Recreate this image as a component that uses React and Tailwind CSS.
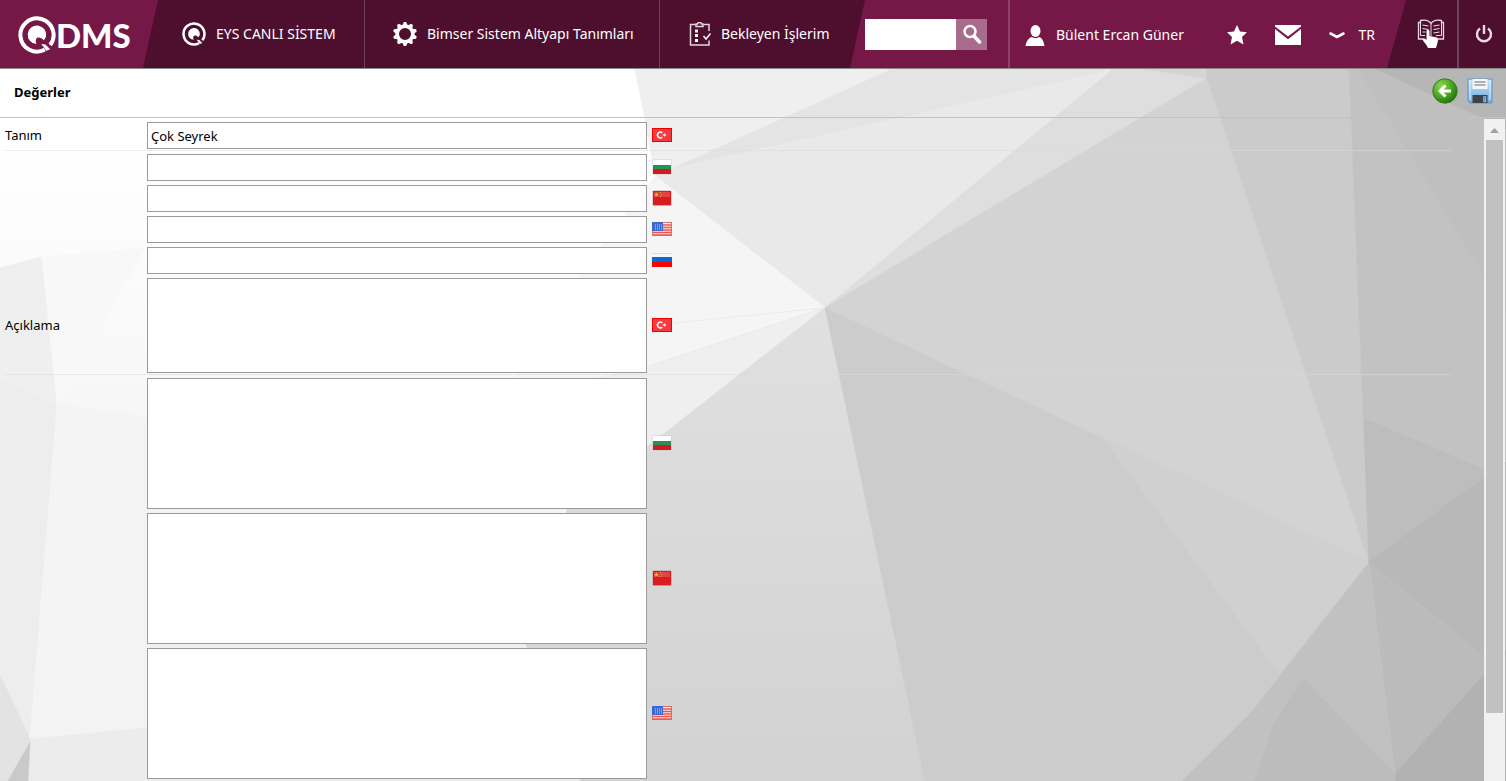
import React, { useState } from 'react';

const flagTypes = {
  tr: 'Türkçe',
  bg: 'Български',
  cn: '中文',
  us: 'English',
  ru: 'Русский',
};

const rows = [
  { id: 'tanim-tr', label: 'Tanım', lang: 'tr', value: 'Çok Seyrek' },
  { id: 'tanim-bg', lang: 'bg' },
  { id: 'tanim-cn', lang: 'cn' },
  { id: 'tanim-us', lang: 'us' },
  { id: 'tanim-ru', lang: 'ru' },
  { id: 'aciklama-tr', label: 'Açıklama', lang: 'tr', area: 'h-[95px]' },
  { id: 'aciklama-bg', lang: 'bg', area: 'h-[131px]' },
  { id: 'aciklama-cn', lang: 'cn', area: 'h-[131px]' },
  { id: 'aciklama-us', lang: 'us', area: 'h-[131px]' },
];

const facets = [
  // left side
  ['0,267 42,256 57,404 0,380', '#efefef'],
  ['42,256 145,247 57,404', '#f8f8f8'],
  ['0,380 57,404 30,739 0,675', '#ededed'],
  ['57,404 147,417 147,728 30,739', '#f3f3f3'],
  ['57,404 147,417 30,739', '#f4f4f4'],
  ['30,739 147,728 600,700 600,781 28,781', '#ececec'],
  ['0,675 30,739 8,781 0,781', '#e3e3e3'],
  ['30,742 8,781 28,781', '#c9c9c9'],
  // top middle
  ['635,68 892,68 672,168 655,175 645,118', '#efefef'],
  ['892,68 1120,68 1020,90 672,168', '#e4e4e4'],
  ['672,168 1020,90 1113,68 825,307 655,175', '#e9e9e9'],
  ['655,175 825,307 567,509 500,400 560,300', '#f5f5f5'],
  ['825,307 647,366 500,400 567,509', '#efefef'],
  ['1113,68 1207,68 1207,78 825,307', '#dedede'],
  ['1145,68 1207,68 1207,78', '#d5d5d5'],
  // centre
  ['825,307 567,509 526,644 581,781 925,781', 'url(#fade)'],
  ['825,307 1207,77 1369,562', '#d3d3d3'],
  ['825,307 1369,562 1250,714 1182,781 925,781', '#cccccc'],
  ['825,307 1369,562 1279,673 1104,439', '#d0d0d0'],
  // right side
  ['1207,68 1349,68 1369,562 1207,77', '#cbcbcb'],
  ['1349,68 1506,68 1506,460 1369,562', '#c2c2c2'],
  ['1358,68 1376,68 1506,130 1506,310', '#bfbfbf'],
  ['1376,68 1506,68 1506,128', '#b6b6b6'],
  ['1364,418 1506,478 1369,562', '#bdbdbd'],
  ['1369,562 1506,461 1506,675', '#b8b8b8'],
  ['1369,562 1506,675 1395,774', '#bbbbbb'],
  ['1395,774 1506,650 1506,781 1395,781', '#b2b2b2'],
  ['1369,562 1250,714 1182,781 1395,781 1395,774', '#c1c1c1'],
  ['1303,678 1274,723 1255,781 1395,781 1395,774', '#bcbcbc'],
];

const Backdrop = () => (
  <svg className="absolute inset-0 w-full h-full" viewBox="0 68 1506 713" preserveAspectRatio="none" aria-hidden="true">
    <defs>
      <linearGradient id="base" x1="0" y1="0" x2="0" y2="1">
        <stop offset="0.1" stopColor="#ffffff" />
        <stop offset="0.6" stopColor="#f4f4f4" />
        <stop offset="1" stopColor="#ececec" />
      </linearGradient>
      <linearGradient id="fade" x1="0" y1="0" x2="0" y2="1">
        <stop offset="0" stopColor="#e0e0e0" />
        <stop offset="1" stopColor="#d2d2d2" />
      </linearGradient>
    </defs>
    <rect x="0" y="68" width="1506" height="713" fill="url(#base)" />
    {facets.map(([points, fill]) => (
      <polygon key={points} points={points} fill={fill} stroke={fill} strokeWidth="0.6" />
    ))}
    <path d="M647 325L825 307M647 366L825 307" stroke="#ebebeb" fill="none" />
  </svg>
);

const QMark = ({ className }) => (
  <svg className={className} viewBox="0 0 36 36" aria-hidden="true">
    <path d="M30.500 27.500A15.700 15.700 0 1 0 25.500 31.800" fill="none" stroke="#fff" strokeWidth="3.800" />
    <path d="M26.500 20A8.800 8.800 0 1 0 17.500 26.600C16.300 24 16.800 22 18 20.600C20.500 20 22.500 21 24.500 23Z" fill="#fff" />
    <path d="M22 26.500L26 27L30.500 31.500L27 33Z" fill="#fff" />
  </svg>
);

const GearIcon = () => (
  <svg className="w-6 h-6" viewBox="0 0 24 24" aria-hidden="true">
    <circle cx="12" cy="12" r="7.700" fill="none" stroke="#fff" strokeWidth="3.400" />
    {[0, 36, 72, 108, 144, 180, 216, 252, 288, 324].map(a => (
      <path key={a} d="M9.200 3.500L10.900 0H13.100L14.800 3.500Z" fill="#fff" transform={`rotate(${a} 12 12)`} />
    ))}
  </svg>
);

const ClipboardIcon = () => (
  <svg className="w-[22px] h-6" viewBox="0 0 22 24" fill="none" stroke="#e6d6de" strokeWidth="1.500" aria-hidden="true">
    <path d="M6.500 2.500H1.500V23H20V18.500M14.500 2.500H20V9" />
    <path d="M7 2V4.500H14V2H12.500A2 1.500 0 0 0 8.500 2Z" />
    <path d="M6 9H9M6 13.500H9M6 18.500H9" stroke="#fff" strokeWidth="3" />
    <path d="M14.500 14L17 17L21.500 11.500" stroke="#fff" />
  </svg>
);

const SearchIcon = () => (
  <svg className="w-5 h-5" viewBox="0 0 20 20" fill="none" stroke="#fff" aria-hidden="true">
    <circle cx="8" cy="7.500" r="5.500" strokeWidth="2.500" />
    <path d="M12 12L17.500 18" strokeWidth="3.500" strokeLinecap="round" />
  </svg>
);

const UserIcon = () => (
  <svg className="w-5 h-[21px]" viewBox="0 0 20 21" fill="#fff" aria-hidden="true">
    <ellipse cx="10.500" cy="6" rx="5" ry="6" />
    <path d="M0.500 21C1.500 15.500 3.500 13.500 6.500 12C9 13.500 12 13.500 14.500 12C17 13.500 18.500 15.500 19.500 21Z" />
  </svg>
);

const StarIcon = () => (
  <svg className="w-5 h-5" viewBox="0 0 20 20" fill="#fff" aria-hidden="true">
    <path d="M10 0L13 6.600L20 7.300L15 12L16.500 19.500L10 15.800L3.500 19.500L5 12L0 7.300L7 6.600Z" />
  </svg>
);

const MailIcon = () => (
  <svg className="w-[26px] h-5" viewBox="0 0 26 20" fill="#fff" aria-hidden="true">
    <path d="M0 0H26V1.500L13 11.500L0 1.500Z" />
    <path d="M0 4L13 14.200L26 4V20H0Z" />
  </svg>
);

const ChevronIcon = () => (
  <svg className="w-4 h-2" viewBox="0 0 16 8" fill="none" stroke="#fff" strokeWidth="2.600" aria-hidden="true">
    <path d="M1.500 2.500L8 6L14.500 2.500" strokeLinecap="round" />
  </svg>
);

const BookIcon = () => (
  <svg className="w-7 h-[30px]" viewBox="0 0 28 30" fill="none" stroke="#e9dae2" aria-hidden="true">
    <path d="M6.500 20H1.500V3.500H3.500V1.500C8 0.500 12 1.500 14 4.500C16 1.500 20 0.500 24.500 1.500V3.500H26.500V20H21" strokeWidth="1.300" />
    <path d="M14 4.500V17M3.500 3V16.500H8M24.500 3V16.500H19" strokeWidth="1" />
    <path d="M5.500 6L11.500 7M5.500 9.500L11.500 10.500M5.500 13H8.500M22.500 6L16.500 7M22.500 9.500L16.500 10.500M22.500 13L16.500 14" strokeWidth="1.100" />
    <path d="M9.500 12C9.500 10.500 12.500 10.500 12.500 12V17L20 18.500C21.500 19 21 22 20.500 24L19 29H11C10 26 6.500 23 5.500 20.500C6 19 8 19.500 9.500 21Z" fill="#fff" stroke="none" />
  </svg>
);

const PowerIcon = () => (
  <svg className="w-[18px] h-[18px]" viewBox="0 0 18 18" fill="none" stroke="#e9dae2" strokeWidth="2.400" aria-hidden="true">
    <path d="M5 3.500A7 7 0 1 0 13 3.500" />
    <path d="M9 0V9" />
  </svg>
);

const BackIcon = () => (
  <svg className="w-[26px] h-[26px]" viewBox="0 0 26 26" aria-hidden="true">
    <defs>
      <radialGradient id="green" cx="0.350" cy="0.300" r="0.750">
        <stop offset="0" stopColor="#8ed84f" />
        <stop offset="0.600" stopColor="#45a41f" />
        <stop offset="1" stopColor="#23700c" />
      </radialGradient>
    </defs>
    <circle cx="13" cy="13" r="12.200" fill="url(#green)" stroke="#347b20" />
    <path d="M19 13H8M13.500 7.500L8 13L13.500 18.500" stroke="#fff" strokeWidth="3" fill="none" />
  </svg>
);

const SaveIcon = () => (
  <svg className="w-[26px] h-[26px]" viewBox="0 0 26 26" aria-hidden="true">
    <defs>
      <linearGradient id="blue" x1="0" y1="0" x2="0" y2="1">
        <stop offset="0" stopColor="#c3e0f6" />
        <stop offset="1" stopColor="#6fabe0" />
      </linearGradient>
    </defs>
    <path d="M1 1H25V25H3L1 23Z" fill="url(#blue)" stroke="#5f94c8" />
    <path d="M3 2V22M23 2V22" stroke="#e0f1fd" />
    <path d="M5.500 1H20.500V11H5.500Z" fill="#f7f7f7" />
    <path d="M7.500 4H18.500M7.500 7H18.500" stroke="#999" strokeWidth="1.500" />
    <path d="M5.500 17H20.500V25H5.500Z" fill="#3c4248" />
    <path d="M16.500 18.500H19V24H16.500Z" fill="#4d9ee0" stroke="#a9d4f5" strokeWidth="0.500" />
  </svg>
);

const Flag = ({ lang }) => (
  <svg className="w-5 h-4 mb-0.5 shrink-0" viewBox="0 0 20 16" role="img" aria-label={flagTypes[lang]}>
    {lang === 'tr' && (
      <>
        <rect x="0.500" y="1.500" width="19" height="13" fill="#f93a3d" stroke="#f00000" />
        <path d="M10.300 6A2.800 2.800 0 1 0 10.300 10" fill="none" stroke="#fff" strokeWidth="1.500" />
        <path d="M10.500 8L13 6.300V7.300L14.500 8L13 8.900V9.800Z" fill="#fff" />
      </>
    )}
    {lang === 'bg' && (
      <>
        <rect x="0.500" y="0.500" width="19" height="15" rx="1" fill="#bbb" opacity="0.600" />
        <rect x="1" y="1" width="18" height="5" fill="#fff" />
        <rect x="1" y="6" width="18" height="4" fill="#279157" />
        <rect x="1" y="10" width="18" height="5" fill="#d5191f" />
      </>
    )}
    {lang === 'cn' && (
      <>
        <rect x="0.500" y="0.500" width="19" height="15.500" rx="1" fill="#a33" opacity="0.400" />
        <rect x="1" y="1" width="18" height="14" fill="#d91c20" />
        <rect x="2" y="2" width="16" height="5" fill="#df4446" />
        <path d="M4.500 2.500L5.200 4H6.500L5.500 5L6 6.500L4.500 5.600L3 6.500L3.500 5L2.500 4H3.800Z" fill="#f6c928" />
        <path d="M8 2.500H9M9 4.500H10M8 6.500H9" stroke="#f0a32a" />
      </>
    )}
    {lang === 'us' && (
      <>
        <rect x="0.500" y="1.500" width="19" height="13" fill="#fbe9e4" stroke="#cf7468" />
        <path d="M1 4H19M1 6.500H19M1 9H19M1 11.500H19M1 14H19" stroke="#f0564e" strokeWidth="1.300" />
        <rect x="0" y="1" width="11" height="9" fill="#3a68cf" />
        <path d="M3 4H10M3 6H10M3 8H10" stroke="#bcd2fa" strokeDasharray="1 1" />
      </>
    )}
    {lang === 'ru' && (
      <>
        <rect x="0" y="1" width="20" height="5" fill="#f7f7f7" />
        <rect x="0" y="5" width="20" height="5" fill="#0b6ad0" />
        <rect x="0" y="10" width="20" height="5" fill="#f50505" />
        <path d="M0 1.500H20" stroke="#ddd" />
      </>
    )}
  </svg>
);

const Header = () => (
  <header className="flex h-[69px] shrink-0 bg-[#751848] border-b border-[#8a8a8a] text-white text-sm">
    <a href="#home" className="flex items-center w-[143px] shrink-0 pl-[18px] pt-0.5" aria-label="QDMS">
      <QMark className="w-[38px] h-[38px]" />
      <span className="font-[Lato,sans-serif] font-black text-[33px] leading-8">DMS</span>
    </a>
    <nav className="flex shrink-0 w-[722px] bg-[#4e0f2f] [clip-path:polygon(15px_0,100%_0,calc(100%-15px)_100%,0_100%)]">
      <a href="#sistem" className="flex items-center gap-[10px] w-[222px] pl-[39px] border-r border-[#71405a] whitespace-nowrap">
        <QMark className="w-6 h-6" />
        EYS CANLI SİSTEM
      </a>
      <a href="#altyapi" className="flex items-center gap-[10px] w-[295px] pl-7 border-r border-[#71405a] whitespace-nowrap">
        <GearIcon />
        Bimser Sistem Altyapı Tanımları
      </a>
      <a href="#isler" className="flex items-center gap-[10px] pl-[29px] whitespace-nowrap">
        <ClipboardIcon />
        Bekleyen İşlerim
      </a>
    </nav>
    <form className="flex items-center shrink-0 pr-[21px] border-r-2 border-[#8d4069]" onSubmit={e => e.preventDefault()}>
      <input type="search" aria-label="Ara" className="w-[91px] h-[31px] bg-white px-1 text-black outline-none" />
      <button type="submit" aria-label="Ara" className="flex items-center justify-center w-[31px] h-[31px] bg-[#a76b8b]">
        <SearchIcon />
      </button>
    </form>
    <div className="flex flex-1 items-center pl-[15px] pt-0.5">
      <a href="#profil" className="flex items-center gap-[11px] whitespace-nowrap">
        <UserIcon />
        Bülent Ercan Güner
      </a>
      <div className="flex items-center ml-auto pr-3">
        <button type="button" aria-label="Favoriler" className="mr-7"><StarIcon /></button>
        <button type="button" aria-label="Mesajlar" className="mr-7"><MailIcon /></button>
        <button type="button" className="flex items-center gap-[14px]">
          <ChevronIcon />
          TR
        </button>
      </div>
    </div>
    <div className="flex shrink-0 bg-[#4e0f2f] [clip-path:polygon(19px_0,100%_0,100%_100%,0_100%)]">
      <button type="button" aria-label="Yardım" className="flex items-center pl-[30px] pr-3 border-r-2 border-[#71405a]">
        <BookIcon />
      </button>
      <button type="button" aria-label="Çıkış" className="flex items-center pl-4 pr-[13px]">
        <PowerIcon />
      </button>
    </div>
  </header>
);

const FormRow = ({ row }) => {
  const [value, setValue] = useState(row.value || '');
  const line = row.label ? 'border-b border-dotted border-[#dadada]' : '';
  const field = 'block w-[500px] bg-white border border-[#9b9b9b] px-[3px] outline-none';
  return (
    <div className="flex gap-0.5">
      <div className={`flex items-center w-[141px] shrink-0 pl-px pt-[3px] pb-px ${line}`}>
        {row.label && <label htmlFor={row.id}>{row.label}</label>}
      </div>
      <div className={`flex flex-1 items-center gap-[5px] pt-[3px] pb-px ${line}`}>
        {row.area ? (
          <textarea
            id={row.id}
            aria-label={row.label ? undefined : `Açıklama ${flagTypes[row.lang]}`}
            className={`${field} ${row.area} resize-none`}
            value={value}
            onChange={e => setValue(e.target.value)}
          />
        ) : (
          <input
            id={row.id}
            type="text"
            aria-label={row.label ? undefined : `Tanım ${flagTypes[row.lang]}`}
            className={`${field} h-[27px]`}
            value={value}
            onChange={e => setValue(e.target.value)}
          />
        )}
        <Flag lang={row.lang} />
      </div>
    </div>
  );
};

const App = () => {
  return (
    <div className="flex flex-col h-screen overflow-hidden font-['Noto_Sans','Open_Sans',sans-serif] text-black">
      <Header />
      <div className="relative flex flex-col flex-1 min-h-0">
        <Backdrop />
        <div className="relative flex items-center justify-between h-[49px] shrink-0 pl-[14px] pr-[13px] border-b border-[#c2c2c2]">
          <h1 className="text-[13px] font-bold">Değerler</h1>
          <div className="flex gap-[9px] pb-1">
            <button type="button" aria-label="Geri"><BackIcon /></button>
            <button type="button" aria-label="Kaydet"><SaveIcon /></button>
          </div>
        </div>
        <div className="relative flex flex-1 min-h-0 pt-px">
          <main className="flex-1 pl-1 pr-8 text-[13px] overflow-hidden">
            {rows.map(row => (
              <FormRow key={row.id} row={row} />
            ))}
          </main>
          <div className="flex flex-col items-center w-[21px] mr-px bg-[#f1f1f1]" aria-hidden="true">
            <svg className="w-[9px] h-[21px] shrink-0" viewBox="0 0 9 21" fill="#a0a0a0">
              <path d="M0 14L4.500 9L9 14Z" />
            </svg>
            <div className="w-[17px] h-[573px] bg-[#c1c1c1]" />
          </div>
        </div>
      </div>
    </div>
  );
};

export default App;
